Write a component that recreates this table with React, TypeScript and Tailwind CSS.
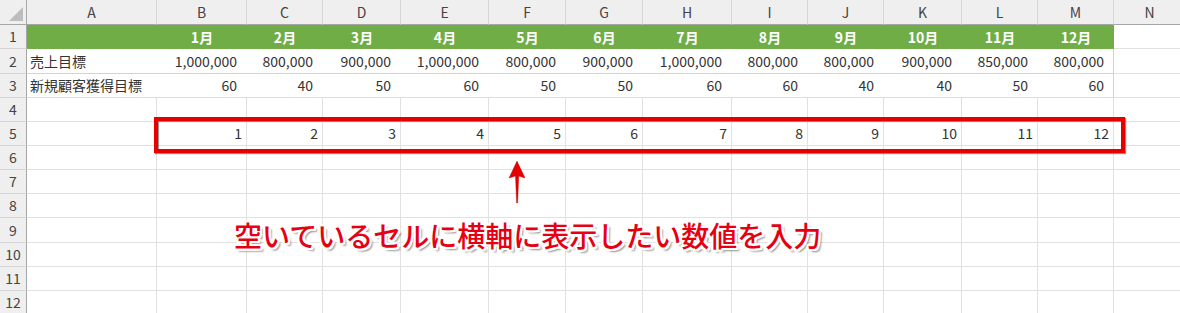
import React from "react";

const cols = ["A", "B", "C", "D", "E", "F", "G", "H", "I", "J", "K", "L", "M", "N"];
const sales = ["1,000,000", "800,000", "900,000", "1,000,000", "800,000", "900,000", "1,000,000", "800,000", "800,000", "900,000", "850,000", "800,000"];
const customers = ["60", "40", "50", "60", "50", "50", "60", "60", "40", "40", "50", "60"];

function RowHead({ n }: { n: number }) {
  return (
    <div className="flex items-center justify-center bg-[#efefef] border-r border-b border-r-[#a6a6a6] border-b-[#d6d6d6] text-[14px] text-[#444]">
      {n}
    </div>
  );
}

function GridCell({ children, align = "right" }: { children?: React.ReactNode; align?: "right" | "left" }) {
  return (
    <div
      className={
        align === "right"
          ? "flex items-center justify-end pr-[4px] border-r border-b border-[#e1e1e1] text-[14px] text-[#333] overflow-hidden"
          : "flex items-center justify-start pl-[3px] border-r border-b border-[#e1e1e1] text-[14px] text-[#333] overflow-hidden"
      }
    >
      {children}
    </div>
  );
}

export default function App() {
  return (
    <div className="relative w-[1180px] h-[313px] overflow-hidden bg-white font-['Noto_Sans_CJK_JP','Noto_Sans',sans-serif]">
      <div className="grid grid-cols-[27px_130px_90px_76px_78px_88px_77px_77px_89px_76px_76px_78px_76px_76px_72px] grid-rows-[25px_24px_25px_24px_24px_24px_24px_24px_24px_25px_24px_24px_24px]">
        {/* header row */}
        <div className="relative bg-[#efefef] border-r border-b border-[#a6a6a6]">
          <svg className="absolute left-0 top-0" width="27" height="25" viewBox="0 0 27 25">
            <polygon points="23,7 23,21 9,21" fill="#bdbdbd" />
          </svg>
        </div>
        {cols.map((c) => (
          <div
            key={c}
            className="flex items-center justify-center bg-[#efefef] border-r border-b border-r-[#d6d6d6] border-b-[#a6a6a6] text-[14px] text-[#444]"
          >
            {c}
          </div>
        ))}

        {/* row 1 */}
        <RowHead n={1} />
        <div className="bg-[#70ad47]" />
        {sales.map((_, i) => (
          <div key={i} className="flex items-center justify-center bg-[#70ad47] text-[14px] font-bold text-white">
            {i + 1}月
          </div>
        ))}
        <GridCell />

        {/* row 2 */}
        <RowHead n={2} />
        <div className="flex items-center pl-[3px] border-b border-[#c6e0b4] text-[14px] text-[#333]">売上目標</div>
        {sales.map((s, i) => (
          <div
            key={i}
            className={
              i === 11
                ? "flex items-center justify-end pr-[9px] border-b border-r border-[#c6e0b4] text-[14px] text-[#333]"
                : "flex items-center justify-end pr-[10px] border-b border-[#c6e0b4] text-[14px] text-[#333]"
            }
          >
            {s}
          </div>
        ))}
        <GridCell />

        {/* row 3 */}
        <RowHead n={3} />
        <div className="flex items-center pl-[3px] border-b border-[#dcdcdc] text-[14px] text-[#333] whitespace-nowrap">新規顧客獲得目標</div>
        {customers.map((s, i) => (
          <div
            key={i}
            className={
              i === 11
                ? "flex items-center justify-end pr-[9px] border-b border-r border-b-[#dcdcdc] border-r-[#c6e0b4] text-[14px] text-[#333]"
                : "flex items-center justify-end pr-[10px] border-b border-[#dcdcdc] text-[14px] text-[#333]"
            }
          >
            {s}
          </div>
        ))}
        <GridCell />

        {/* rows 4-12 */}
        {[4, 5, 6, 7, 8, 9, 10, 11, 12].map((r) => (
          <React.Fragment key={r}>
            <RowHead n={r} />
            <GridCell />
            {sales.map((_, i) => (
              <GridCell key={i}>{r === 5 ? i + 1 : null}</GridCell>
            ))}
            <GridCell />
          </React.Fragment>
        ))}
      </div>

      {/* red highlight box */}
      <div className="absolute left-[154px] top-[117px] w-[971px] h-[36px] border-4 border-[#e60000] shadow-[1px_1px_1px_rgba(0,0,0,0.45),inset_1px_1px_1px_rgba(0,0,0,0.45)]" />

      {/* arrow */}
      <svg className="absolute left-[508px] top-[161px]" width="20" height="44" viewBox="0 0 20 44">
        <polygon points="9,0 1,17 7.5,15 8.6,42 9.6,42 10.8,15 17,17" fill="#e60000" stroke="#b00000" strokeWidth="0.4" />
      </svg>

      {/* annotation text */}
      <div className="absolute left-[234px] top-[221px] text-[28px] leading-none font-medium text-[#e60012] whitespace-nowrap [text-shadow:2px_0_0_#fff,-2px_0_0_#fff,0_2px_0_#fff,0_-2px_0_#fff,2px_2px_0_#fff,-2px_-2px_0_#fff,2px_-2px_0_#fff,-2px_2px_0_#fff,3px_3px_2px_rgba(0,0,0,0.45)]">
        空いているセルに横軸に表示したい数値を入力
      </div>
    </div>
  );
}
